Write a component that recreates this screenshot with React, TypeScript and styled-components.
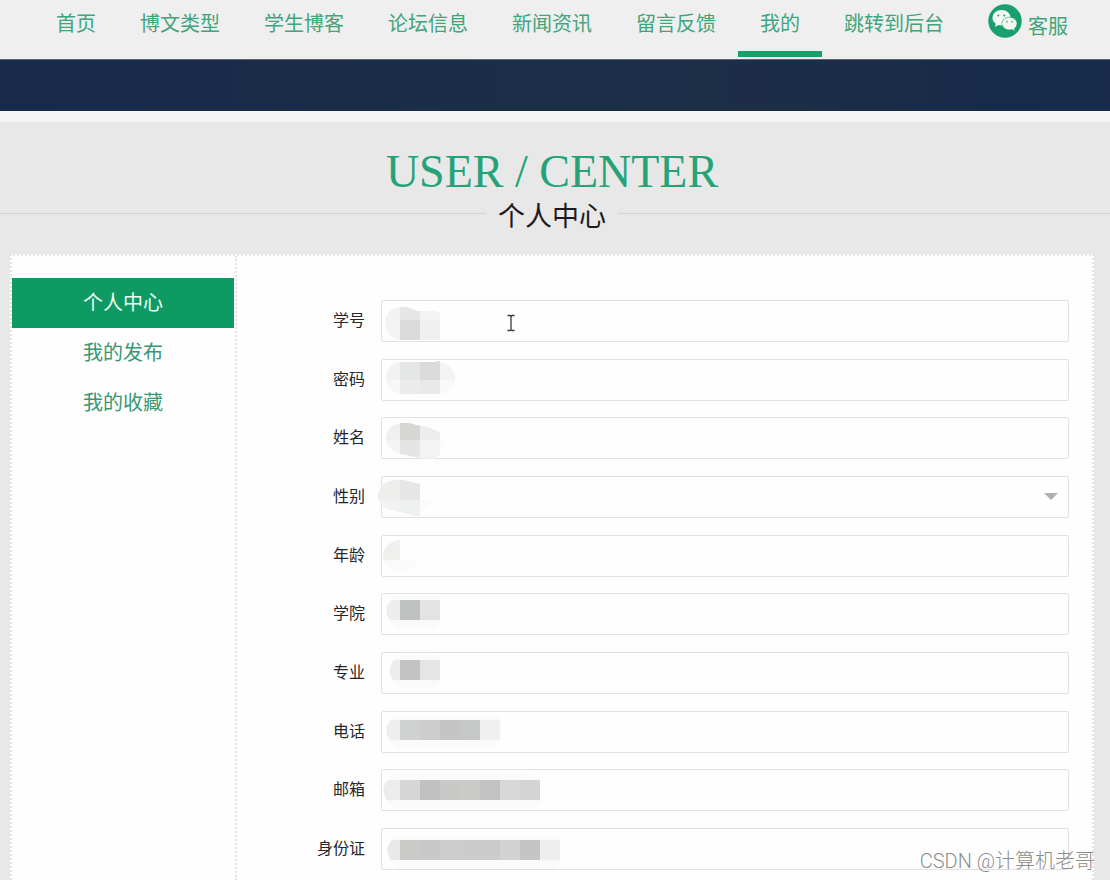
import React from "react";
import styled, { createGlobalStyle } from "styled-components";

const GREEN = "#17a06b";
const CJK = '"Noto Sans CJK SC", sans-serif';

const GlobalStyle = createGlobalStyle`
  *, *::before, *::after { box-sizing: border-box; }
  body { margin: 0; background: #e8e8e8; font-family: ${CJK}; }
`;

const Page = styled.div`
  position: relative;
  display: flex;
  flex-direction: column;
  min-height: 100vh;
  overflow: hidden;
`;

const Nav = styled.nav`
  display: flex;
  justify-content: center;
  padding: 0 0 2px 14px;
  background: #efefef;
`;

const NavLink = styled.a<{ $active?: boolean }>`
  padding: 0 22px 5px;
  border-bottom: 6px solid ${(p) => (p.$active ? GREEN : "transparent")};
  color: #41a57c;
  font-size: 20px;
  line-height: 46px;
  white-space: nowrap;
  text-decoration: none;
`;

const ServiceLink = styled(NavLink)`
  display: flex;
  align-items: flex-start;
  gap: 6px;
  height: 57px;
  padding-bottom: 0;
  line-height: 52px;

  svg { margin-top: 4px; flex: none; }
`;

const Banner = styled.div`
  height: 63px;
  border-top: 1px solid #5a6678;
  border-bottom: 11px solid #f5f5f5;
  background: linear-gradient(90deg, #172a4a 0%, #1a2c48 28%, #1b2f48 50%, #1d2d47 68%, #162b49 92%, #182b4b 100%);
`;

const Heading = styled.header`
  padding: 23px 6px 0 0;
  text-align: center;
`;

const Title = styled.h1`
  margin: 0;
  color: #24a377;
  font: 400 46px/54px "Liberation Serif", serif;
`;

const Subtitle = styled.h2`
  display: flex;
  gap: 12px;
  margin: 0 -6px 0 0;
  color: #1c1c20;
  font-size: 27px;
  font-weight: 400;
  line-height: 32px;

  &::before, &::after {
    content: "";
    flex: 1;
    height: 1px;
    margin-top: 14px;
    background: #d3d3d3;
  }
  &::after { flex-basis: 6px; }
`;

const Panel = styled.main`
  display: flex;
  flex: 1;
  margin: 23px 16px 0 10px;
  border: 2px dotted #e6e6e6;
  border-bottom: 0;
  background: #fefefe;
`;

const Side = styled.aside`
  flex: 0 0 225px;
  padding: 22px 1px 0 0;
  border-right: 2px dotted #e2e2e2;
`;

const SideLink = styled.a<{ $active?: boolean }>`
  display: block;
  padding-bottom: 2px;
  color: ${(p) => (p.$active ? "#e9fff6" : "#379874")};
  background: ${(p) => (p.$active ? "#0f9963" : "transparent")};
  font-size: 20px;
  line-height: 48px;
  text-align: center;
  text-decoration: none;
`;

const Form = styled.form`
  flex: 1;
  display: grid;
  align-content: space-between;
  min-height: 624px;
  padding: 44px 23px 10px 0;
`;

const Row = styled.div`
  display: flex;
  gap: 16px;
`;

const Label = styled.label`
  flex: 0 0 128px;
  color: #26262a;
  font-size: 16px;
  line-height: 38px;
  text-align: right;
`;

const Field = styled.div`
  position: relative;
  flex: 1;
  height: 42px;
`;

const Input = styled.input`
  display: block;
  width: 100%;
  height: 100%;
  padding: 0 12px;
  border: 1px solid #e2e2e2;
  border-radius: 2px;
  background: #fefefe;
  font: 16px ${CJK};
  outline: none;
`;

const Select = styled(Input)`
  appearance: none;
`;

const Overlay = styled.svg`
  position: absolute;
  top: 0;
  left: -1px;
  overflow: visible;
  pointer-events: none;
`;

const Arrow = styled.svg`
  position: absolute;
  top: 17px;
  right: 11px;
  pointer-events: none;
`;

const Cursor = styled.svg`
  position: absolute;
  top: 14px;
  left: 125px;
  pointer-events: none;
`;

const Watermark = styled.div`
  position: absolute;
  right: 15px;
  bottom: 4px;
  color: #8d8d8d;
  font: 300 20px/30px Roboto, ${CJK};
  white-space: nowrap;
`;

type Cell = [x: number, y: number, w: number, h: number, fill: string];

type Mosaic = { shape: string; cells: Cell[] };

/* A single line of 20px blocks with a faint halo under and above it. */
const strip = (left: number, top: number, colors: string[]): Mosaic => {
  const end = colors.length * 20;
  return {
    shape: `M${left + 8} ${top - 5} H${end - 8} Q${end} ${top - 5} ${end} ${top} V${top + 22} Q${end - 2} ${top + 28} ${end - 10} ${top + 28} H${left + 14} Q${left + 7} ${top + 27} ${left + 3} ${top + 19} Q${left - 3} ${top + 9} ${left + 5} ${top} Z`,
    cells: [
      [0, top - 5, end, 33, "#fafafa"],
      ...colors.map((c, i): Cell => [i * 20, top, 20, 20, c]),
    ],
  };
};

const fields: { id: string; label: string; select?: boolean; cursor?: boolean; mosaic: Mosaic }[] = [
  {
    id: "number",
    label: "学号",
    cursor: true,
    mosaic: {
      shape: "M18 7 H27 L38 11 L56 11 L60 13 V40 H20 C9 37 5 31 5 24 C5 15 10 9 18 7 Z",
      cells: [
        [0, 0, 20, 20, "#f2f2f2"], [20, 0, 20, 20, "#e6e6e6"], [40, 0, 20, 20, "#f3f3f3"],
        [0, 20, 20, 22, "#f4f4f4"], [20, 20, 20, 22, "#dadada"], [40, 20, 20, 22, "#f0f0f0"],
      ],
    },
  },
  {
    id: "password",
    label: "密码",
    mosaic: {
      shape: "M20 3 H54 L58 2 C69 4 75 11 75 19 C75 28 68 34 60 35 H20 C11 33 6 27 6 19 C6 10 12 4 20 3 Z",
      cells: [
        [0, 0, 20, 21, "#f2f2f1"], [20, 0, 20, 21, "#e4e7e6"], [40, 0, 20, 21, "#dadada"], [60, 0, 20, 21, "#f3f5f5"],
        [0, 21, 20, 20, "#f7f7f6"], [20, 21, 20, 20, "#ebebeb"], [40, 21, 20, 20, "#e9e9e9"], [60, 21, 20, 20, "#f9f9f9"],
      ],
    },
  },
  {
    id: "name",
    label: "姓名",
    mosaic: {
      shape: "M20 6 H30 L36 8 C48 9 56 13 60 16 V23 H65 C65 35 58 42 50 42 L41 41 L20 37 C10 33 6 29 6 22 C6 14 11 8 20 6 Z",
      cells: [
        [0, 0, 20, 23, "#efefee"], [20, 0, 20, 23, "#d6d6d5"], [40, 0, 20, 23, "#ededed"],
        [0, 23, 20, 20, "#f4f4f3"], [20, 23, 20, 20, "#e4e4e4"], [40, 23, 20, 20, "#f3f3f3"], [60, 23, 6, 20, "#fcfcfc"],
      ],
    },
  },
  {
    id: "gender",
    label: "性别",
    select: true,
    mosaic: {
      shape: "M16 4 H24 L40 8 V24 H52 C50 31 45 34 40 35 V40 H35 L20 36 C5 34 -2 28 -2 20 C-2 10 7 4 16 4 Z",
      cells: [
        [-2, 0, 22, 24, "#eeeeed"], [20, 0, 20, 24, "#e6e6e6"],
        [-2, 24, 22, 18, "#f2f2f2"], [20, 24, 20, 18, "#eef1f0"], [40, 24, 14, 18, "#fbfbfb"],
      ],
    },
  },
  {
    id: "age",
    label: "年龄",
    mosaic: {
      shape: "M20 5 V25 H38 C35 34 28 37 21 37 C10 37 3 29 3 21 C3 12 10 6 20 5 Z",
      cells: [[0, 0, 20, 25, "#efefee"], [0, 25, 40, 14, "#fafafa"]],
    },
  },
  { id: "college", label: "学院", mosaic: strip(6, 7, ["#ededed", "#bfc1c0", "#e3e3e3"]) },
  { id: "major", label: "专业", mosaic: strip(9, 8, ["#ededed", "#c3c3c4", "#e5e5e5"]) },
  {
    id: "phone",
    label: "电话",
    mosaic: strip(6, 9, ["#eeeeec", "#d0d2d1", "#cdcdcd", "#c5c5c4", "#c5c8c7", "#f0f0f0"]),
  },
  {
    id: "email",
    label: "邮箱",
    mosaic: strip(3, 11, ["#ececec", "#d6d6d6", "#c0c2c1", "#c9c8c6", "#cacbc9", "#c3c3c3", "#d8d8d8", "#d4d4d4"]),
  },
  {
    id: "idcard",
    label: "身份证",
    mosaic: strip(7, 12, ["#e9e9e9", "#cacac9", "#c7c9c8", "#cdcdcc", "#cccccc", "#cccccc", "#d2d4d3", "#c5c5c5", "#eeeeee"]),
  },
];

const MosaicView = ({ id, mosaic }: { id: string; mosaic: Mosaic }) => (
  <Overlay width="200" height="42" aria-hidden="true">
    <clipPath id={`mask-${id}`}>
      <path d={mosaic.shape} />
    </clipPath>
    <g clipPath={`url(#mask-${id})`} shapeRendering="crispEdges">
      {mosaic.cells.map(([x, y, w, h, fill], i) => (
        <rect key={i} x={x} y={y} width={w} height={h} fill={fill} />
      ))}
    </g>
  </Overlay>
);

const WechatIcon = () => (
  <svg width="34" height="34" viewBox="0 0 34 34" aria-hidden="true">
    <circle cx="17" cy="17" r="16.7" fill={GREEN} />
    <path
      d="M13.6 6c-5.100 0-9.100 3.400-9.100 7.800 0 2.500 1.300 4.600 3.300 6l-.9 3.200 3.500-1.900c1 .3 2.100.5 3.200.5 5 0 9-3.400 9-7.800s-4-7.800-9-7.800z"
      fill="#f4f8f5"
    />
    <path
      d="M21.400 13.200c-4.200 0-7.500 2.800-7.500 6.300s3.300 6.400 7.500 6.400c.9 0 1.800-.2 2.600-.4l3.200 1.700-.9-2.700c1.700-1.200 2.700-2.900 2.700-5 0-3.500-3.300-6.300-7.600-6.300z"
      fill="#f4f8f5"
      stroke={GREEN}
      strokeWidth="0.6"
    />
    <g fill={GREEN}>
      <circle cx="10.300" cy="11.500" r="1" />
      <circle cx="16.300" cy="11.500" r="1" />
      <circle cx="19" cy="17.700" r="0.8" />
      <circle cx="24" cy="17.700" r="0.8" />
    </g>
  </svg>
);

const navItems = ["首页", "博文类型", "学生博客", "论坛信息", "新闻资讯", "留言反馈", "我的", "跳转到后台"];
const sideItems = ["个人中心", "我的发布", "我的收藏"];

export default function App() {
  return (
    <Page>
      <GlobalStyle />
      <Nav>
        {navItems.map((item) => (
          <NavLink key={item} href="#" $active={item === "我的"}>
            {item}
          </NavLink>
        ))}
        <ServiceLink href="#">
          <WechatIcon />
          客服
        </ServiceLink>
      </Nav>
      <Banner />
      <Heading>
        <Title>USER / CENTER</Title>
        <Subtitle>个人中心</Subtitle>
      </Heading>
      <Panel>
        <Side>
          {sideItems.map((item, i) => (
            <SideLink key={item} href="#" $active={i === 0}>
              {item}
            </SideLink>
          ))}
        </Side>
        <Form>
          {fields.map((f) => (
            <Row key={f.id}>
              <Label htmlFor={f.id}>{f.label}</Label>
              <Field>
                {f.select ? (
                  <>
                    <Select as="select" id={f.id} />
                    <Arrow width="14" height="7" viewBox="0 0 14 7" aria-hidden="true">
                      <path d="M0 0H14L7 7Z" fill="#b0b0b0" />
                    </Arrow>
                  </>
                ) : (
                  <Input id={f.id} type={f.id === "password" ? "password" : "text"} />
                )}
                <MosaicView id={f.id} mosaic={f.mosaic} />
                {f.cursor && (
                  <Cursor width="10" height="18" viewBox="0 0 10 18" aria-hidden="true">
                    <path
                      d="M1.500 1.500H4L5 2.500L6 1.500H8.500M5 2.500V15.500M1.500 16.500H4L5 15.500L6 16.500H8.500"
                      fill="none"
                      stroke="#3a3a3a"
                      strokeWidth="1.300"
                    />
                  </Cursor>
                )}
              </Field>
            </Row>
          ))}
        </Form>
      </Panel>
      <Watermark>CSDN @计算机老哥</Watermark>
    </Page>
  );
}
